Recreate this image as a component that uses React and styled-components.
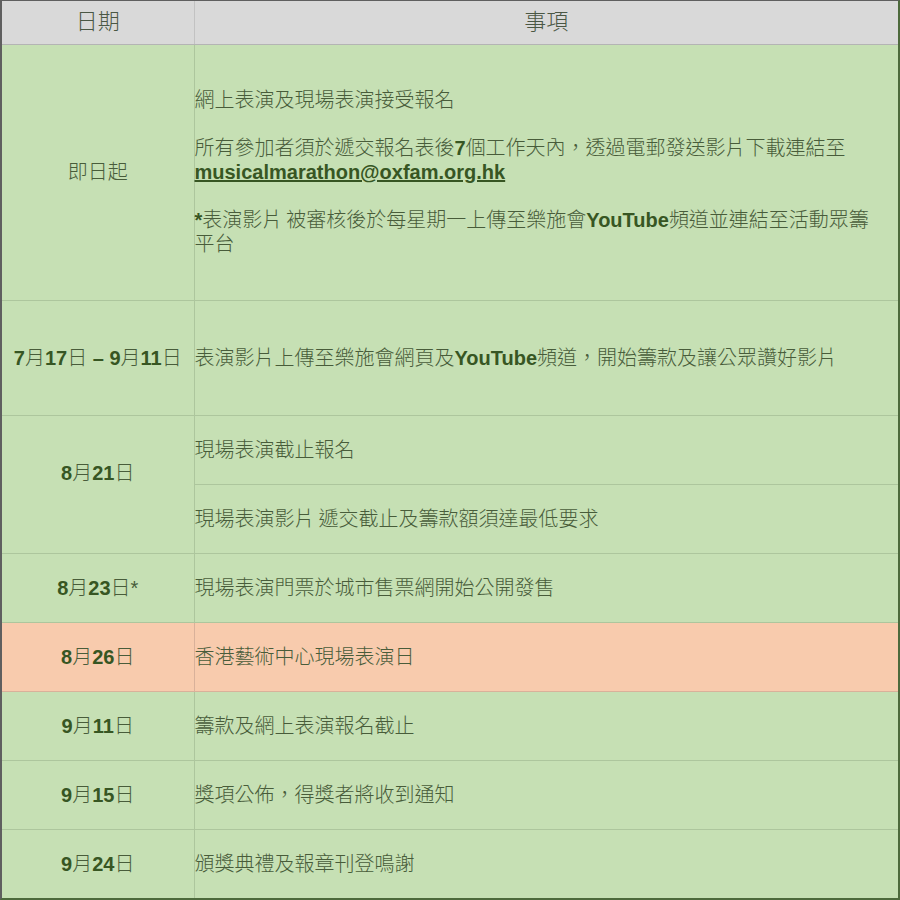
import styled, { createGlobalStyle, css } from "styled-components";

const GlobalStyle = createGlobalStyle`
  html, body {
    margin: 0;
    padding: 0;
    background: #ffffff;
  }
`;

const Frame = styled.div`
  width: 900px;
  height: 900px;
  box-sizing: border-box;
  border-top: 1px solid #5f5f5f;
  border-left: 2px solid #5f5f5f;
  border-right: 2px solid #4d6a3c;
  border-bottom: 2px solid #4d6a3c;
  overflow: hidden;
  background: #c6e0b4;
`;

const Table = styled.table`
  width: 100%;
  border-collapse: collapse;
  table-layout: fixed;
  font-family: "Liberation Sans", "Noto Sans CJK TC", sans-serif;
  font-size: 20px;
  font-weight: 300;
  line-height: 24px;
  color: #485c3a;
`;

const HeadRow = styled.tr`
  height: 43px;
  background: #d9d9d9;
`;

const HeadCell = styled.th`
  font-weight: 300;
  font-size: 22px;
  color: #4a5744;
  text-align: center;
  padding: 0;
  border-bottom: 1px solid #b4b4b4;
  border-right: ${(p) => (p.$first ? "1px solid #c2c2c2" : "none")};
`;

const Row = styled.tr`
  height: ${(p) => p.$h}px;
  background: ${(p) => (p.$highlight ? "#f8cbad" : "#c6e0b4")};
`;

const DateCell = styled.td`
  text-align: center;
  vertical-align: middle;
  padding: 0 2px ${(p) => p.$lift || 0}px;
  white-space: nowrap;
  border-right: 1px solid #adc69d;
  border-bottom: 1px solid #adc69d;
  ${(p) =>
    p.$highlight &&
    css`
      border-right-color: #d9b19a;
      border-bottom-color: #d9b19a;
    `}
`;

const ItemCell = styled.td`
  vertical-align: middle;
  padding: 0 26px 0 0;
  border-bottom: 1px solid #adc69d;
  ${(p) =>
    p.$highlight &&
    css`
      border-bottom-color: #d9b19a;
    `}
`;

const B = styled.b`
  color: #375623;
  font-weight: bold;
`;

const Para = styled.p`
  margin: 0;
  & + & {
    margin-top: 24px;
  }
`;

const Mail = styled.a`
  color: #375623;
  font-weight: bold;
  text-decoration: underline;
`;

const Gap = styled.span`
  display: inline-block;
  width: 4px;
`;

const Date = ({ parts }) =>
  parts.map((p, i) =>
    /\d/.test(p) ? <B key={i}>{p}</B> : <span key={i}>{p}</span>
  );

const simpleRows = [
  { date: ["8", "月", "23", "日*"], text: "現場表演門票於城市售票網開始公開發售" },
  { date: ["8", "月", "26", "日"], text: "香港藝術中心現場表演日", highlight: true },
  { date: ["9", "月", "11", "日"], text: "籌款及網上表演報名截止" },
  { date: ["9", "月", "15", "日"], text: "獎項公佈，得獎者將收到通知" },
  { date: ["9", "月", "24", "日"], text: "頒獎典禮及報章刊登鳴謝" },
];

export default function App() {
  return (
    <>
      <GlobalStyle />
      <Frame>
        <Table>
          <colgroup>
            <col style={{ width: 192 }} />
            <col />
          </colgroup>
          <thead>
            <HeadRow>
              <HeadCell $first>日期</HeadCell>
              <HeadCell>事項</HeadCell>
            </HeadRow>
          </thead>
          <tbody>
            <Row $h={256}>
              <DateCell>即日起</DateCell>
              <ItemCell>
                <Para>網上表演及現場表演接受報名</Para>
                <Para>
                  所有參加者須於遞交報名表後<B>7</B>個工作天內，透過電郵發送影片下載連結至
                  <br />
                  <Mail>musicalmarathon@oxfam.org.hk</Mail>
                </Para>
                <Para>
                  <B>*</B>表演影片<Gap />被審核後於每星期一上傳至樂施會<B>YouTube</B>頻道並連結至活動眾籌平台
                </Para>
              </ItemCell>
            </Row>
            <Row $h={115}>
              <DateCell>
                <Date parts={["7", "月", "17", "日 ", "– 9", "月", "11", "日"]} />
              </DateCell>
              <ItemCell>
                表演影片上傳至樂施會網頁及<B>YouTube</B>頻道，開始籌款及讓公眾讚好影片
              </ItemCell>
            </Row>
            <Row $h={69}>
              <DateCell rowSpan={2} $lift={22}>
                <Date parts={["8", "月", "21", "日"]} />
              </DateCell>
              <ItemCell>現場表演截止報名</ItemCell>
            </Row>
            <Row $h={69}>
              <ItemCell>
                現場表演影片<Gap />遞交截止及籌款額須達最低要求
              </ItemCell>
            </Row>
            {simpleRows.map((r) => (
              <Row key={r.text} $h={69} $highlight={r.highlight}>
                <DateCell $highlight={r.highlight}>
                  <Date parts={r.date} />
                </DateCell>
                <ItemCell $highlight={r.highlight}>{r.text}</ItemCell>
              </Row>
            ))}
          </tbody>
        </Table>
      </Frame>
    </>
  );
}
